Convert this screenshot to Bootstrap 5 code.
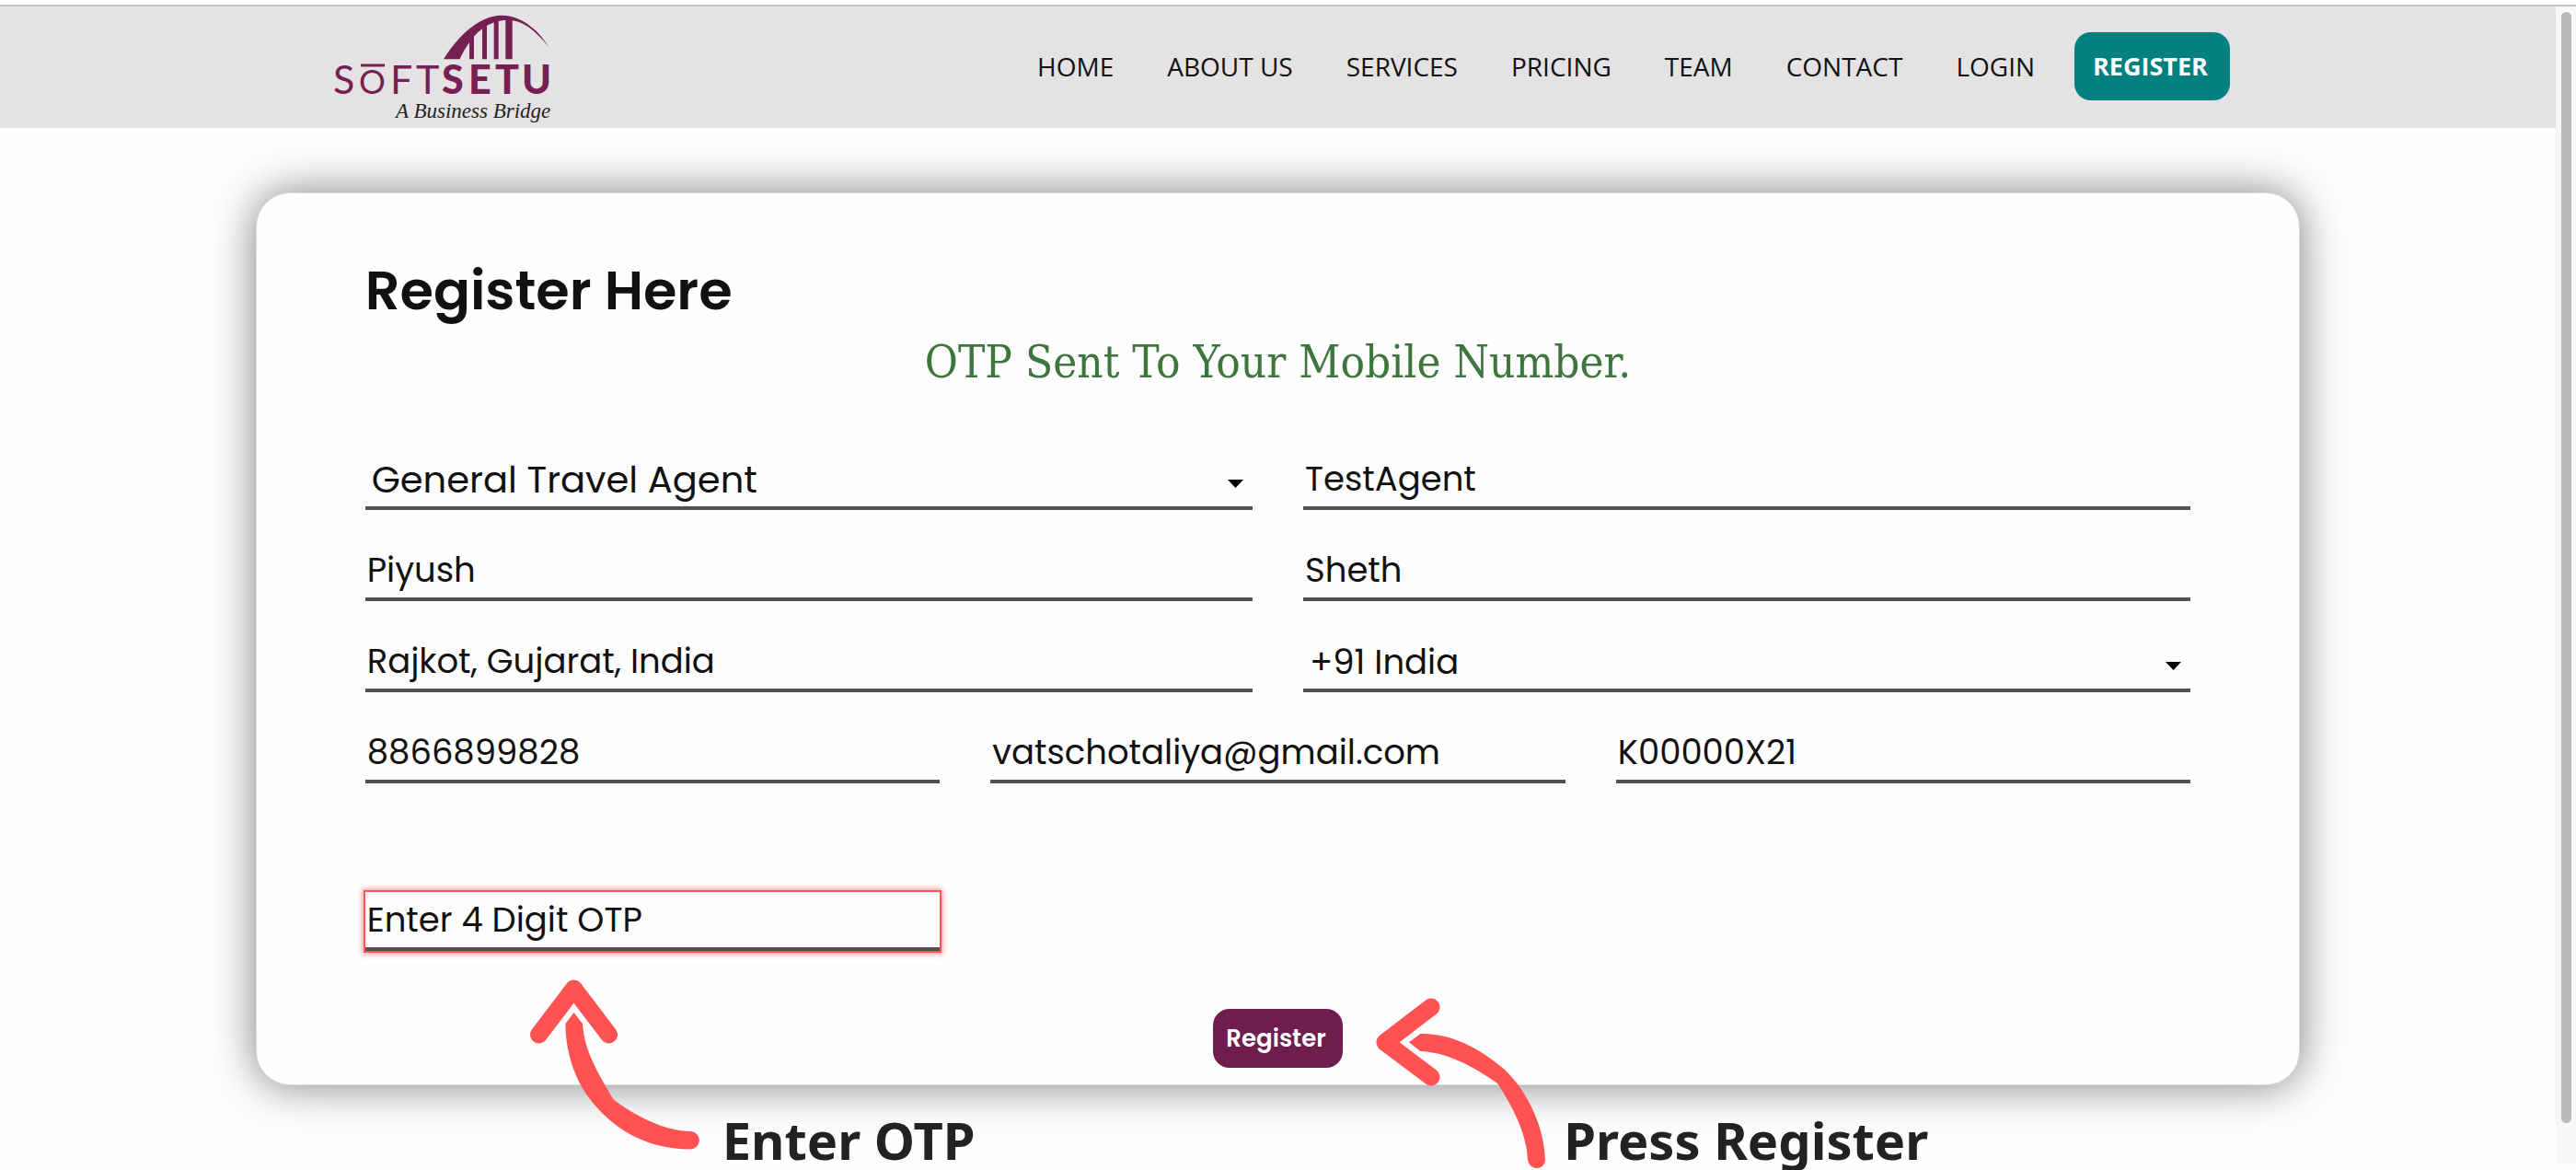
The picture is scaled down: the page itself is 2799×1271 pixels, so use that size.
<!DOCTYPE html>
<html lang="en">
<head>
<meta charset="utf-8">
<meta name="viewport" content="width=device-width, initial-scale=1">
<title>SoftSetu - Register</title>
<link href="https://cdn.jsdelivr.net/npm/bootstrap@5.3.0/dist/css/bootstrap.min.css" rel="stylesheet">
<style>
  body { font-family: Poppins, Inter, sans-serif; color: #111; background: #fefefe; }
  .window-edge { height: 7px; flex: none; background: #fff; border-bottom: 2px solid #c4c2c3; }
  .site-nav { background: #e4e2e3; height: 132px; padding: 0 12.75% 2px; }
  .site-nav .nav-link { font-family: "Open Sans", sans-serif; font-size: 28px; line-height: 34px; padding: 0 29px; color: #111; }
  .site-nav .btn-join { font-family: "Open Sans", sans-serif; font-size: 27px; line-height: 34px; font-weight: 700; color: #fff; background: #008080; border: 0; border-radius: 18px; padding: 20px 24px 20px 20px; margin-left: 14px; }
  .logo { width: 250px; height: 130px; }
  .form-panel { margin: 70px 10% 0; padding: 72px 118px 18px; border: 1px solid #d8d8d8; border-radius: 37px; background: #fefefe; box-shadow: 0 0 48px rgba(0,0,0,.5); }
  .panel-title { font-size: 59px; line-height: 68px; font-weight: 600; margin: 0 0 14px; }
  .otp-note { font-family: "Roboto Slab", "DejaVu Serif Condensed", "DejaVu Serif", serif; font-size: 49px; line-height: 60px; color: #3c763d; margin: 0 0 66px; text-align: center; }
  .fields { --bs-gutter-x: 55px; --bs-gutter-y: 35px; }
  .line-input { display: block; width: 100%; height: 64px; padding: 0 2px; border: 0; border-bottom: 4px solid #505050; border-radius: 0; background: transparent; color: #111; font-size: 37px; line-height: 60px; outline: 0; }
  .line-input::placeholder { color: #111; opacity: 1; }
  select.line-input { appearance: none; padding: 1px 7px 0; background: url("data:image/svg+xml,%3Csvg xmlns='http://www.w3.org/2000/svg' width='17' height='9'%3E%3Cpath d='M0 0h17L8.500 9z'/%3E%3C/svg%3E") no-repeat right 10px top 31px; }
  .line-input.wide-text { font-size: 40px; }
  .otp-row { margin-top: 83px; }
  .otp-active { box-shadow: 0 0 0 2px #ff5757, 0 0 6px 3px #ff8a8a; }
  .btn-send { font-size: 26px; line-height: 34px; font-weight: 600; color: #fff; background: #6f1d4d; border: 0; border-radius: 18px; padding: 15px 18px 15px 14px; margin-top: 63px; }
  .callout-layer { position: absolute; pointer-events: none; }
  .callout-label { font-family: "Segoe UI", "Noto Sans", sans-serif; font-weight: 700; font-size: 56px; line-height: 60px; color: #222; white-space: nowrap; }
  .arrow { width: 195px; height: 195px; fill: #ff5252; }
  .arrow polyline { fill: none; stroke: #ff5252; stroke-width: 19; stroke-linecap: round; stroke-linejoin: round; }
  .arrow-otp { left: 13.13%; top: 850px; }
  .label-otp { left: 22.8%; top: 998px; }
  .arrow-send { left: 54.55%; top: 870px; }
  .label-send { left: 64%; top: 998px; }
  .scroll-rail { width: 22px; flex: none; background: #f7f7f7; margin-bottom: 7px; padding: 6px 5px 44px 6px; }
  .scroll-thumb { height: 100%; border-radius: 6px; background: #b9b9b9; }
</style>
</head>
<body class="vh-100 overflow-hidden d-flex flex-column">
<div class="window-edge"></div>
<div class="d-flex flex-grow-1 overflow-hidden">
  <div class="flex-grow-1">
    <header>
      <nav class="site-nav d-flex align-items-center justify-content-between" aria-label="Main">
        <a href="#" aria-label="Softsetu home">
          <svg class="logo d-block" viewBox="354 7 250 130" role="img" aria-label="Softsetu, A Business Bridge">
            <g fill="#751f52">
              <path d="M482 64.300C500 36 522 17 545 16.700C568 17 586 34 596 51C582 33 568 22 553 22C529 21 512 38 499.500 64.300Z"/>
              <path d="M510 43L515 36V64.300H510ZM524 27L529 24V64.300H524ZM536.700 21H541.700V64.300H536.700ZM549.300 20H556.700V64.300H549.300Z"/>
              <rect x="392" y="69.500" width="26" height="3"/>
              <g font-family="Lato, sans-serif" font-size="43">
                <text x="362 390" y="101.500">S<tspan font-size="36">O</tspan></text>
                <text x="424 452" y="101.500">FT</text>
                <text x="480 509 538 567" y="101.500" font-weight="900">SETU</text>
              </g>
            </g>
            <text x="430" y="128" font-family="'Monotype Corsiva', 'Liberation Serif', serif" font-style="italic" font-size="23" fill="#222">A Business Bridge</text>
          </svg>
        </a>
        <div class="d-flex align-items-center">
          <a class="nav-link" href="#">HOME</a>
          <a class="nav-link" href="#">ABOUT US</a>
          <a class="nav-link" href="#">SERVICES</a>
          <a class="nav-link" href="#">PRICING</a>
          <a class="nav-link" href="#">TEAM</a>
          <a class="nav-link" href="#">CONTACT</a>
          <a class="nav-link" href="#">LOGIN</a>
          <a class="btn btn-join" href="#">REGISTER</a>
        </div>
      </nav>
    </header>
    <main class="form-panel position-relative">
      <h1 class="panel-title">Register Here</h1>
      <p class="otp-note">OTP Sent To Your Mobile Number.</p>
      <form>
        <div class="row fields">
          <div class="col-6"><select class="line-input wide-text" aria-label="Business type"><option>General Travel Agent</option></select></div>
          <div class="col-6"><input class="line-input" type="text" aria-label="Company name" value="TestAgent"></div>
          <div class="col-6"><input class="line-input" type="text" aria-label="First name" value="Piyush"></div>
          <div class="col-6"><input class="line-input" type="text" aria-label="Last name" value="Sheth"></div>
          <div class="col-6"><input class="line-input" type="text" aria-label="City" value="Rajkot, Gujarat, India"></div>
          <div class="col-6"><select class="line-input" aria-label="Country code"><option>+91 India</option></select></div>
          <div class="col-4"><input class="line-input" type="tel" aria-label="Mobile number" value="8866899828"></div>
          <div class="col-4"><input class="line-input" type="email" aria-label="Email" value="vatschotaliya@gmail.com"></div>
          <div class="col-4"><input class="line-input" type="text" aria-label="Reference code" value="K00000X21"></div>
        </div>
        <div class="row fields otp-row">
          <div class="col-4"><input class="line-input otp-active" type="text" aria-label="One-time password" placeholder="Enter 4 Digit OTP"></div>
        </div>
        <div class="text-center"><button class="btn btn-send" type="button">Register</button></div>
      </form>

      <svg class="callout-layer arrow arrow-otp" viewBox="570 1060 195 195" aria-hidden="true">
        <polyline points="585.500,1124 623.500,1074 661.500,1124"/>
        <path d="M623.500 1100L633 1112C635 1142 649 1164 666.700 1194.500C690 1212 722 1229 751 1229C763 1231 763 1247 750 1248.600C700 1248 665 1225 641 1194C622 1169 614.400 1138 614.400 1112Z"/>
      </svg>
      <div class="callout-layer callout-label label-otp">Enter OTP</div>
      <svg class="callout-layer arrow arrow-send" viewBox="1490 1080 195 195" aria-hidden="true">
        <polyline points="1556,1094 1506,1132.300 1556,1170"/>
        <path d="M1532 1132.300L1544.400 1123C1580 1122 1613 1142 1636 1162C1664 1189 1679 1228 1680 1260C1679 1272 1663 1272 1661 1260C1660 1232 1645 1203 1628.300 1177C1600 1157 1572 1143 1544.400 1142Z"/>
      </svg>
      <div class="callout-layer callout-label label-send">Press Register</div>
    </main>
  </div>
  <div class="scroll-rail"><div class="scroll-thumb"></div></div>
</div>
<script src="https://cdn.jsdelivr.net/npm/bootstrap@5.3.0/dist/js/bootstrap.bundle.min.js"></script>
</body>
</html>
